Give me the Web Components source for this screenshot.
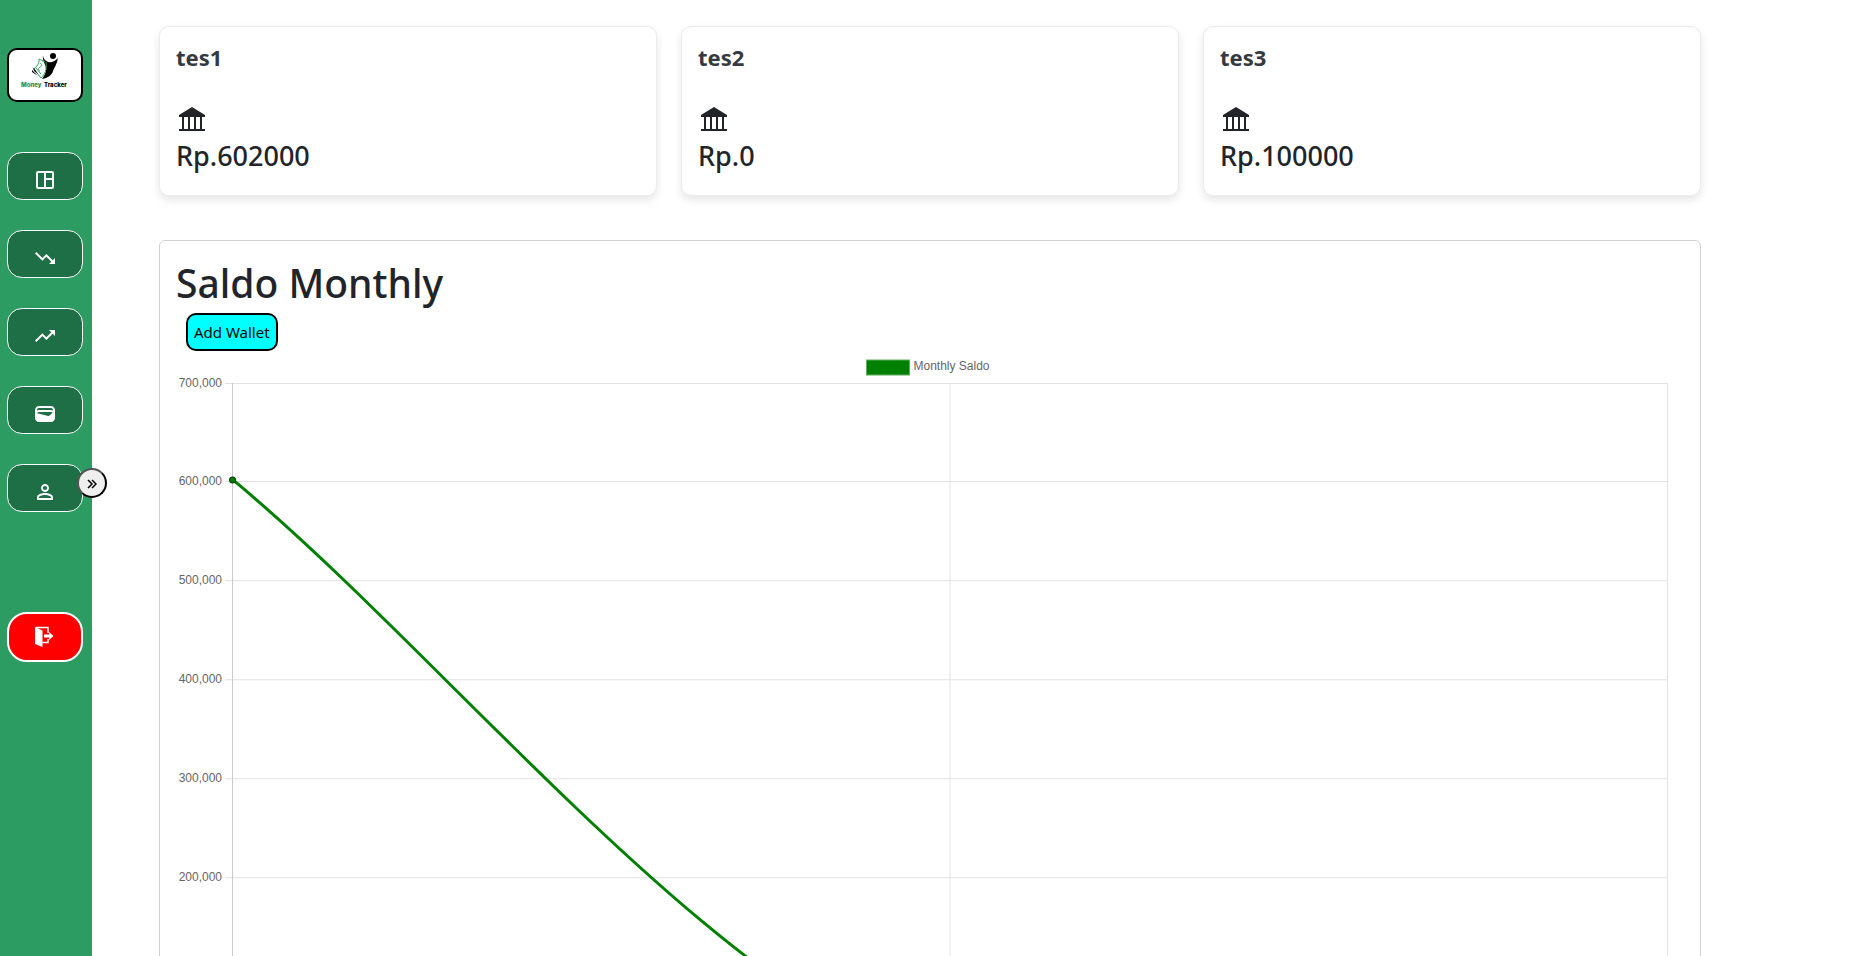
<!DOCTYPE html>
<html lang="id">
<head>
<meta charset="utf-8">
<meta name="viewport" content="width=device-width, initial-scale=1">
<title>Money Tracker</title>
<style>
  body { margin: 0; background: #fff; color: #212529; font: 16px/24px "Noto Sans", sans-serif; }
</style>
</head>
<body>
<money-app></money-app>

<template id="t-app">
  <style>
    :host { display: flex; align-items: flex-start; min-height: 100vh; }
    side-bar { flex: none; }
    main { flex: 1; min-width: 0; padding: 26px 156px 40px 67px; }
    .cards { display: grid; grid-template-columns: repeat(3, minmax(0, 1fr)); gap: 24px; margin-bottom: 44px; }
  </style>
  <side-bar></side-bar>
  <main>
    <section class="cards" aria-label="Wallets">
      <wallet-card><span slot="name">tes1</span>Rp.602000</wallet-card>
      <wallet-card><span slot="name">tes2</span>Rp.0</wallet-card>
      <wallet-card><span slot="name">tes3</span>Rp.100000</wallet-card>
    </section>
    <chart-panel>
      <span slot="title">Saldo Monthly</span>
      <span slot="action">Add Wallet</span>
      <saldo-chart></saldo-chart>
    </chart-panel>
  </main>
</template>

<template id="t-side">
  <style>
    :host { display: block; box-sizing: border-box; position: sticky; top: 0; width: 92px; height: 100vh; padding: 48px 9px 0 7px; background: #2c9c62; }
    .logo { display: block; box-sizing: border-box; height: 54px; border: 2px solid #000; border-radius: 10px; background: #fff; overflow: hidden; margin-bottom: 50px; }
    .logo svg { display: block; width: 100%; height: 100%; }
    nav { display: flex; flex-direction: column; gap: 30px; margin-bottom: 100px; }
    .toggle { position: absolute; top: 468px; right: -15px; box-sizing: border-box; width: 30px; height: 30px; padding: 2px 0 0; border: 2px outset #000; border-radius: 50%; background: #efefef; display: flex; align-items: center; justify-content: center; cursor: pointer; }
    .toggle svg { width: 10px; height: 10px; }
  </style>
  <a class="logo" href="#" aria-label="Money Tracker">
    <svg viewBox="0 0 72 50">
      <circle cx="44" cy="6" r="3"/>
      <path d="M34 5c0 4 3 6 5 7 3 1 6 0 10-4-1 6-4 10-5 13-1 4-5 7-11 8 2-3 4-6 4-10 0-5-4-8-3-14z"/>
      <path d="M30 9l6 3M30 9c1 4-3 8-5 10l7 9c4-4 6-8 5-16" fill="none" stroke="#2ca45b"/>
      <path d="M31 13c2 1 2 3 0 4s-2 3 0 4M27 18l5 6" fill="none" stroke="#2ca45b"/>
      <path d="M24 17l5 7-4-3zM23 20l6 6-6-4z"/>
      <text x="12" y="37" font-family="Inter" font-weight="800" font-size="6" fill="#1c8d48">Money</text>
      <text x="35" y="37" font-family="Inter" font-weight="800" font-size="6">Tracker</text>
    </svg>
  </a>
  <nav aria-label="Menu">
    <nav-button label="Dashboard"><svg viewBox="0 0 24 24"><path fill-rule="evenodd" d="M5 3h14a2 2 0 0 1 2 2v14a2 2 0 0 1-2 2H5a2 2 0 0 1-2-2V5a2 2 0 0 1 2-2zm0 2v14h6V5zm8 0v5h6V5zm0 7v7h6v-7z"/></svg></nav-button>
    <nav-button label="Expense"><svg viewBox="0 0 24 24"><path d="M16 18l2.29-2.29-4.88-4.88-4 4L2 7.41 3.41 6l6 6 4-4 6.3 6.29L22 12v6z"/></svg></nav-button>
    <nav-button label="Income"><svg viewBox="0 0 24 24"><path d="M16 6l2.29 2.29-4.88 4.88-4-4L2 16.59 3.41 18l6-6 4 4 6.3-6.29L22 12V6z"/></svg></nav-button>
    <nav-button label="Wallet"><svg viewBox="0 0 24 24"><path d="M18 4H6C3.79 4 2 5.79 2 8v8c0 2.21 1.79 4 4 4h12c2.21 0 4-1.79 4-4V8c0-2.21-1.79-4-4-4zm-1.86 9.77c-.24.2-.57.28-.88.2L4.15 11.25C4.45 10.52 5.16 10 6 10h12c.67 0 1.26.34 1.63.84l-3.49 2.93zM6 6h12c1.1 0 2 .9 2 2v.55c-.59-.34-1.27-.55-2-.55H6c-.73 0-1.41.21-2 .55V8c0-1.1.9-2 2-2z"/></svg></nav-button>
    <nav-button label="Profile"><svg viewBox="0 0 24 24"><path d="M12 5.9a2.1 2.1 0 1 1 0 4.2 2.1 2.1 0 0 1 0-4.2m0 9c2.97 0 6.1 1.46 6.1 2.1v1.1H5.900V17c0-.64 3.13-2.1 6.100-2.1M12 4C9.790 4 8 5.790 8 8s1.790 4 4 4 4-1.790 4-4-1.790-4-4-4zm0 9c-2.670 0-8 1.340-8 4v3h16v-3c0-2.660-5.330-4-8-4z"/></svg></nav-button>
  </nav>
  <nav-button label="Logout" danger><svg viewBox="0 0 24 24"><path d="M2 2l7.500 3.500V22L2 19z"/><path d="M3 2.500h12V8M9.500 17.500H15V14" fill="none" stroke="#fff" stroke-width="1.500"/><path d="M11 9.500h5V7l4.500 4-4.500 4v-2.500h-5z"/></svg></nav-button>
  <button class="toggle" type="button" aria-label="Expand menu"><svg viewBox="0 0 10 10"><path d="M1 1l4 4-4 4M5 1l4 4-4 4" fill="none" stroke="#000" stroke-width="1.500"/></svg></button>
</template>

<template id="t-nav">
  <style>
    :host { display: block; }
    button { display: flex; justify-content: center; align-items: center; box-sizing: border-box; width: 100%; height: 48px; padding: 8px 0 0; border: 1px solid #fff; border-radius: 15px; background: #1e6e46; cursor: pointer; }
    :host([danger]) button { height: 50px; padding: 0; border-width: 2px; border-radius: 20px; background: #f00; }
    ::slotted(svg) { width: 24px; height: 24px; fill: #fff; }
  </style>
  <button type="button"><slot></slot></button>
</template>

<template id="t-card">
  <style>
    :host { display: block; box-sizing: border-box; padding: 16px; border: 1px solid #e9ecef; border-radius: 10px; background: #fff; box-shadow: 0 4px 8px rgba(0, 0, 0, .1); }
    h2 { margin: 0 0 36px; font-size: 22px; line-height: 28px; font-weight: 700; color: #343a40; }
    svg { display: block; width: 32px; height: 24px; }
    p { margin: 8px 0 0; font-size: 27px; line-height: 34px; font-weight: 500; padding-bottom: 6px; }
  </style>
  <h2><slot name="name"></slot></h2>
  <svg viewBox="0 0 32 24" fill="#212529" aria-hidden="true"><path d="M15 0l13 8v2H2V8zM5 10h2v12H5zM11 10h2v12h-2zM17 10h2v12h-2zM23 10h2v12h-2zM2 22h26v2H2z" transform="translate(1 0)"/></svg>
  <p><slot></slot></p>
</template>

<template id="t-panel">
  <style>
    :host { display: block; padding: 16px; border: 1px solid #d0d0d0; border-radius: 6px; background: #fff; }
    h1 { margin: 0 0 4px; font-size: 39px; line-height: 52px; font-weight: 500; }
    button { display: block; margin: 0 0 0 10px; height: 38px; padding: 0 6px; border: 2px solid #000; border-radius: 10px; background: #0ff; color: #000; font: inherit; font-size: 15px; cursor: pointer; }
  </style>
  <h1><slot name="title"></slot></h1>
  <button type="button"><slot name="action"></slot></button>
  <slot></slot>
</template>

<template id="t-chart">
  <style>
    :host { display: block; }
    svg { display: block; width: 100%; height: auto; overflow: visible; }
    text { font: 12px "Liberation Sans", Arial, sans-serif; fill: #666; }
    .grid { stroke: #e2e2e2; fill: none; }
    .axis { stroke: #c8c8c8; }
    .y { text-anchor: end; }
    .x { text-anchor: middle; }
    .line { fill: none; stroke: green; stroke-width: 3; }
    .dot { fill: green; stroke: #14381a; }
  </style>
  <svg viewBox="0 0 1507 753" role="img" aria-label="Monthly Saldo"></svg>
</template>

<script>
  const define = (name, templateId, setup) => customElements.define(name, class extends HTMLElement {
    constructor() {
      super();
      this.attachShadow({ mode: "open" }).append(document.getElementById(templateId).content.cloneNode(true));
    }
    connectedCallback() { if (setup) setup(this, this.shadowRoot); }
  });

  define("nav-button", "t-nav", (host, root) => {
    root.querySelector("button").setAttribute("aria-label", host.getAttribute("label"));
  });
  define("wallet-card", "t-card");
  define("chart-panel", "t-panel");

  define("saldo-chart", "t-chart", (host, root) => {
    const data = [["tes1", 602000], ["tes2", 0], ["tes3", 100000]];
    const left = 57, right = 1491, top = 32, bottom = 724, max = 700000, tension = 0.3;
    const yOf = v => bottom - (bottom - top) * v / max;
    const pts = data.map(([, v], i) => [left + (right - left) * i / (data.length - 1), yOf(v)]);
    const dist = (a, b) => Math.hypot(a[0] - b[0], a[1] - b[1]);
    let out = "";
    for (let v = 0; v <= max; v += 100000) {
      const y = Math.floor(yOf(v)) + 0.5;
      out += `<path class="grid" d="M${left - 8} ${y}H${right}"/><text class="y" x="${left - 11}" y="${y + 3.5}">${v.toLocaleString("en-US")}</text>`;
    }
    pts.forEach(([x], i) => {
      out += `<path class="grid${i ? "" : " axis"}" d="M${x - 0.5} ${top}V${bottom + 8}"/><text class="x" x="${x}" y="${bottom + 22}">${data[i][0]}</text>`;
    });
    // Each point gets a control point on both sides, weighted by the distance to its neighbours.
    const ctrl = pts.map((p, i) => {
      const a = pts[i - 1] || p, b = pts[i + 1] || p, d1 = dist(a, p), d2 = dist(p, b);
      const fa = tension * d1 / (d1 + d2), fb = tension * d2 / (d1 + d2);
      const dx = b[0] - a[0], dy = b[1] - a[1];
      return { before: [p[0] - fa * dx, p[1] - fa * dy], after: [p[0] + fb * dx, Math.min(bottom, p[1] + fb * dy)] };
    });
    let d = `M${pts[0]}`;
    for (let i = 1; i < pts.length; i++) d += `C${ctrl[i - 1].after} ${ctrl[i].before} ${pts[i]}`;
    out += `<path class="line" d="${d}"/>`;
    pts.forEach(([x, y]) => { out += `<circle class="dot" cx="${x - 0.5}" cy="${y}" r="3"/>`; });
    out += `<rect x="690" y="9" width="43" height="15" fill="green" stroke="#5fb05f"/><text x="737" y="19">Monthly Saldo</text>`;
    root.querySelector("svg").innerHTML = out;
  });

  define("side-bar", "t-side");
  define("money-app", "t-app");
</script>
</body>
</html>
